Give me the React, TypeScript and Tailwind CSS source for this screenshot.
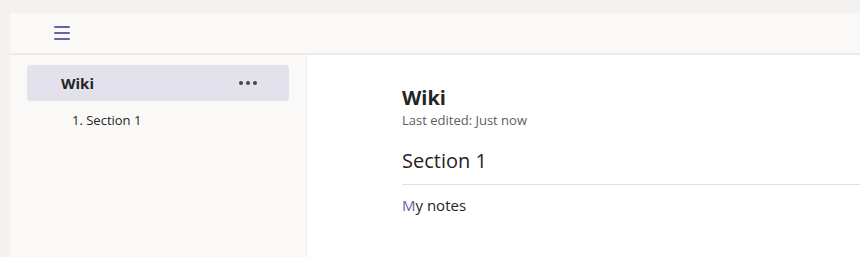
export default function App() {
  return (
    <div
      className="h-[257px] w-[860px] overflow-hidden bg-[#f3f2f1] pl-[10px] pt-[13px] text-[#252423]"
      style={{ fontFamily: '"Open Sans", "Noto Sans", sans-serif' }}
    >
      <div className="flex h-full flex-col">
        {/* top bar */}
        <div className="flex h-[42px] shrink-0 items-center border-b-2 border-[#edebe9] bg-[#faf9f8] pl-[44px]">
          <svg width="16" height="14" viewBox="0 0 16 14">
            <rect x="0" y="0" width="16" height="2" rx="1" fill="#6264a7" />
            <rect x="0" y="6" width="16" height="2" rx="1" fill="#6264a7" />
            <rect x="0" y="12" width="16" height="2" rx="1" fill="#6264a7" />
          </svg>
        </div>

        <div className="flex flex-1">
          {/* sidebar */}
          <div className="w-[297px] shrink-0 border-r border-[#edebe9] bg-[#faf9f8] pl-[17px] pr-[17px] pt-[10px]">
            <div className="flex h-[36px] items-center justify-between rounded-[4px] bg-[#e2e1ec] pl-[34px] pr-[32px]">
              <span className="text-[15px] font-bold">Wiki</span>
              <span className="flex gap-[3px]">
                <span className="h-[4px] w-[4px] rounded-full bg-[#484644]" />
                <span className="h-[4px] w-[4px] rounded-full bg-[#484644]" />
                <span className="h-[4px] w-[4px] rounded-full bg-[#484644]" />
              </span>
            </div>
            <div className="mt-[10px] pl-[45px] text-[13px] text-[#252423]">1. Section 1</div>
          </div>

          {/* content */}
          <div className="flex-1 bg-white pl-[95px] pt-[30px]">
            <div className="text-[20px] font-bold leading-[26px]">Wiki</div>
            <div className="text-[13px] leading-[18px] text-[#605e5c]">Last edited: Just now</div>
            <div className="mt-[18px] border-b border-[#e1dfdd] pb-[9px] text-[20px] leading-[28px]">
              Section 1
            </div>
            <div className="mt-[10px] text-[15px] leading-[20px]">
              <span className="text-[#6264a7]">M</span>y notes
            </div>
          </div>
        </div>
      </div>
    </div>
  );
}
